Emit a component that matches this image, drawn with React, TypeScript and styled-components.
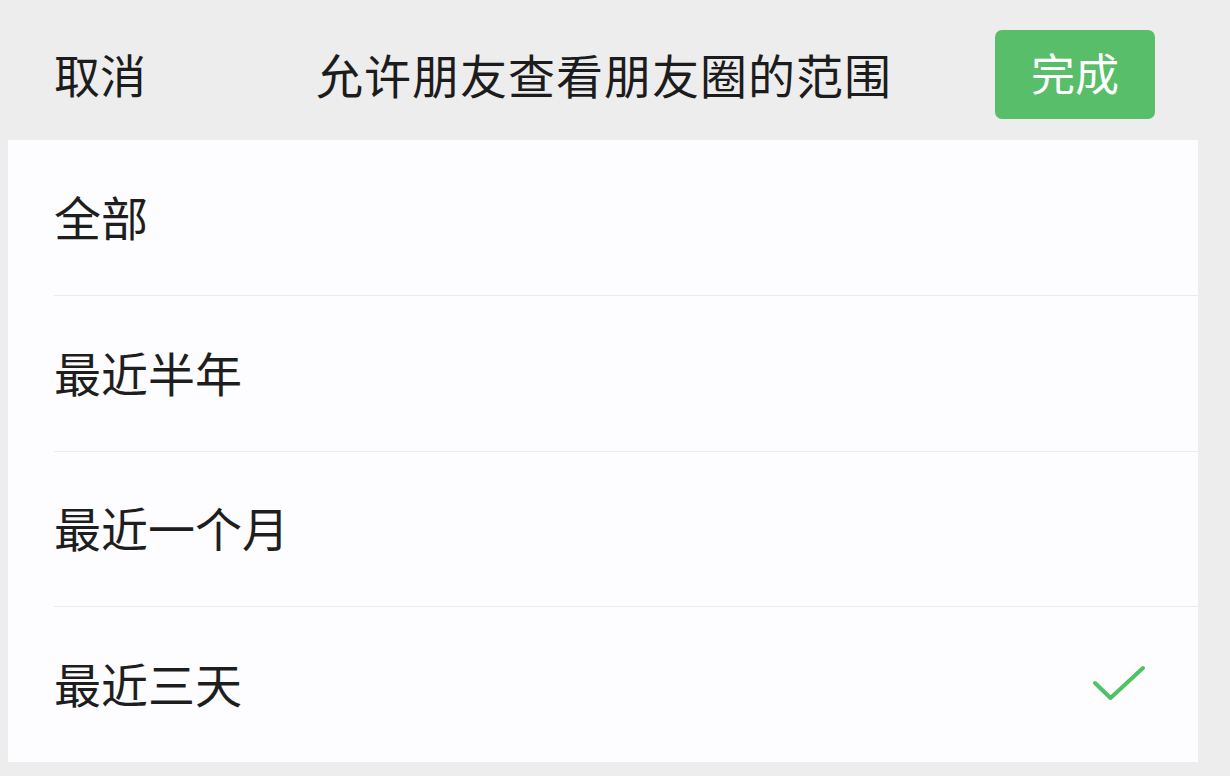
import * as React from "react";
import styled, { createGlobalStyle } from "styled-components";

const GlobalStyle = createGlobalStyle`
  html, body {
    margin: 0;
    padding: 0;
    background: #ededee;
    font-family: "Noto Sans CJK SC", "Noto Sans", sans-serif;
  }
`;

const Page = styled.div`
  width: 1230px;
  height: 776px;
  display: flex;
  flex-direction: column;
  background: #ededee;
  overflow: hidden;
`;

const Header = styled.header`
  height: 140px;
  display: flex;
  align-items: center;
  padding: 0 75px 0 54px;
  box-sizing: border-box;
`;

const HeaderText = styled.span<{ $gap?: number; $size?: number }>`
  font-size: ${({ $size }) => $size ?? 46}px;
  letter-spacing: ${({ $size }) => ($size ? 1 : 0)}px;
  line-height: 1;
  color: #1c1c1c;
  margin-left: ${({ $gap }) => $gap ?? 0}px;
  margin-top: 6px;
`;

const Spacer = styled.div`
  flex: 1;
`;

const DoneButton = styled.button`
  width: 160px;
  height: 89px;
  margin-top: 8px;
  border: 0;
  border-radius: 7px;
  background: #58be69;
  color: #fff;
  font-family: inherit;
  font-size: 44px;
  padding: 0 0 4px;
  display: flex;
  align-items: center;
  justify-content: center;
`;

const Panel = styled.div`
  margin: 0 32px 0 8px;
  height: 622px;
  background: #fdfcfe;
  display: flex;
  flex-direction: column;
`;

const Row = styled.div<{ $first?: boolean }>`
  flex: 1;
  margin-left: 46px;
  padding-right: 52px;
  display: flex;
  align-items: center;
  justify-content: space-between;
  border-top: ${({ $first }) => ($first ? "0" : "1px solid #ebebec")};
`;

const RowLabel = styled.span`
  font-size: 47px;
  line-height: 1;
  color: #1e1e1e;
  margin-top: -4px;
`;

const Check = () => (
  <svg width="54" height="40" viewBox="0 0 54 40" fill="none">
    <path
      d="M3 18 L18.5 33 L51 3"
      stroke="#4dc462"
      strokeWidth="4"
      strokeLinecap="round"
      strokeLinejoin="round"
    />
  </svg>
);

const options = ["全部", "最近半年", "最近一个月", "最近三天"];

export default function App() {
  const selected = 3;
  return (
    <Page>
      <GlobalStyle />
      <Header>
        <HeaderText>取消</HeaderText>
        <HeaderText $gap={170} $size={47}>
          允许朋友查看朋友圈的范围
        </HeaderText>
        <Spacer />
        <DoneButton>完成</DoneButton>
      </Header>
      <Panel>
        {options.map((o, i) => (
          <Row key={o} $first={i === 0}>
            <RowLabel>{o}</RowLabel>
            {i === selected && <Check />}
          </Row>
        ))}
      </Panel>
    </Page>
  );
}
